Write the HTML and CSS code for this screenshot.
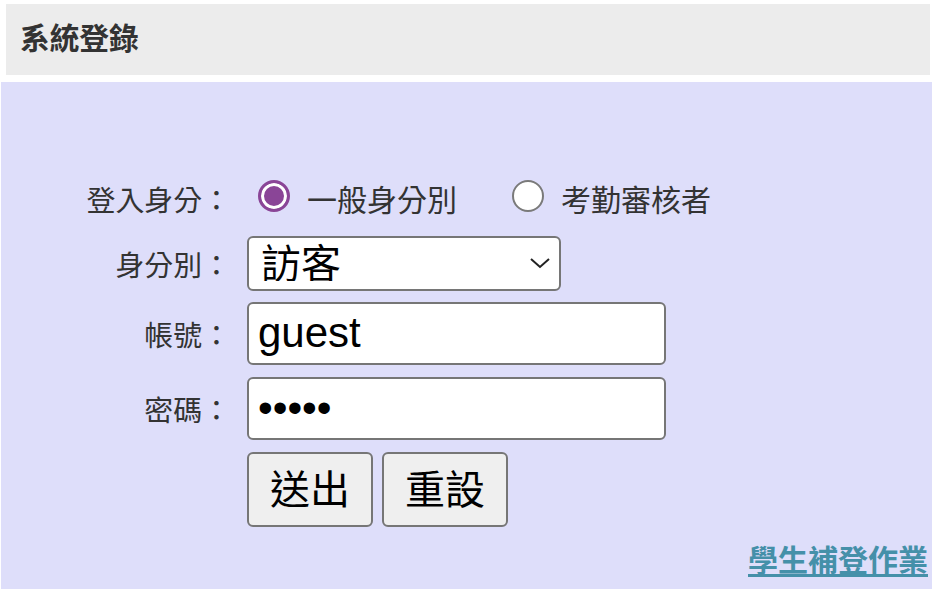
FILE: index.html
```html
<!DOCTYPE html>
<html lang="zh-Hant">
<head>
<meta charset="utf-8">
<title>系統登錄</title>
<link rel="stylesheet" href="styles.css">
</head>
<body>
<div class="header">系統登錄</div>
<div class="panel">
  <form class="form">
    <div class="row row-radio">
      <div class="label">登入身分：</div>
      <div class="field radios">
        <label class="radio"><span class="dot checked"></span><span class="rtext">一般身分別</span></label>
        <label class="radio"><span class="dot"></span><span class="rtext">考勤審核者</span></label>
      </div>
    </div>
    <div class="row row-select">
      <div class="label">身分別：</div>
      <div class="field">
        <div class="select-wrap">
          <select class="select"><option>訪客</option></select>
          <svg class="chev" width="22" height="14" viewBox="0 0 22 14"><path d="M2 3 L11 11 L20 3" fill="none" stroke="#222" stroke-width="2"/></svg>
        </div>
      </div>
    </div>
    <div class="row row-input">
      <div class="label">帳號：</div>
      <div class="field"><input class="text" type="text" value="guest"></div>
    </div>
    <div class="row row-input2">
      <div class="label">密碼：</div>
      <div class="field"><input class="text pw" type="password" value="guest"></div>
    </div>
    <div class="row row-btn">
      <div class="label"></div>
      <div class="field buttons">
        <button type="button" class="btn">送出</button>
        <button type="button" class="btn">重設</button>
      </div>
    </div>
  </form>
  <div class="links"><a class="link" href="#">學生補登作業</a></div>
</div>
</body>
</html>
```
FILE: styles.css
```css
html, body {
  margin: 0;
  padding: 0;
  background: #ffffff;
}
body {
  font-family: "Noto Sans CJK TC", "Noto Sans", sans-serif;
  color: #333;
  width: 932px;
  height: 590px;
  overflow: hidden;
}
.header {
  margin: 4px 2px 0 6px;
  height: 71px;
  background: #ececec;
  box-sizing: border-box;
  padding-left: 14px;
  font-size: 29.7px;
  font-weight: bold;
  line-height: 66px;
  color: #333;
}
.panel {
  margin: 7px 0 0 1px;
  height: 507px;
  background: #dedefa;
  box-sizing: border-box;
  padding-top: 96px;
  position: relative;
}
.form {
  display: flex;
  flex-direction: column;
}
.row {
  display: flex;
  align-items: center;
}
.label {
  width: 230px;
  flex: none;
  text-align: right;
  font-size: 28.9px;
  color: #333;
  line-height: 1;
}
.field {
  margin-left: 16px;
  display: flex;
  align-items: center;
}
.row-radio { height: 40px; }
.row-select { height: 54px; margin-top: 18px; }
.row-input { height: 62px; margin-top: 12px; }
.row-input2 { height: 62px; margin-top: 13px; }
.row-btn { height: 74px; margin-top: 13px; }

.radios { margin-left: 27px; gap: 0; }
.radio {
  display: flex;
  align-items: center;
  font-size: 30px;
  color: #333;
}
.radio + .radio { margin-left: 55px; }
.dot {
  width: 32px;
  height: 32px;
  box-sizing: border-box;
  border-radius: 50%;
  border: 2px solid #7a7a7a;
  background: #fff;
  flex: none;
  margin-top: -4px;
}
.dot.checked {
  border: 3px solid #8a4597;
  background: #8a4597;
  box-shadow: inset 0 0 0 3px #fff;
}
.rtext { margin-left: 17px; }

.select-wrap { position: relative; }
.select {
  appearance: none;
  -webkit-appearance: none;
  width: 314px;
  height: 55px;
  box-sizing: border-box;
  border: 2px solid #767676;
  border-radius: 6px;
  background: #fff;
  font-family: "Noto Sans CJK TC", sans-serif;
  font-size: 40px;
  color: #000;
  padding: 0 0 4px 12px;
  line-height: 1;
}
.chev {
  position: absolute;
  right: 10px;
  top: 20px;
  pointer-events: none;
}
.text {
  width: 419px;
  height: 63px;
  box-sizing: border-box;
  border: 2px solid #767676;
  border-radius: 6px;
  background: #fff;
  font-family: "Liberation Sans", Arial, sans-serif;
  font-size: 42px;
  color: #000;
  padding: 0 0 0 9px;
  outline: none;
}
.pw {
  font-size: 42px;
  letter-spacing: 0;
}
.buttons { gap: 9px; }
.btn {
  width: 126px;
  height: 75px;
  box-sizing: border-box;
  border: 2px solid #767676;
  border-radius: 6px;
  background: #efefef;
  font-family: "Noto Sans CJK TC", sans-serif;
  font-size: 40px;
  color: #000;
  padding: 0 0 4px 0;
  line-height: 1;
}
.links {
  display: flex;
  justify-content: flex-end;
  padding-right: 4px;
  margin-top: 14px;
}
.link {
  font-size: 30px;
  font-weight: bold;
  color: #4590a9;
  text-decoration: underline;
  text-underline-offset: 3px;
  line-height: 1.2;
}
```
